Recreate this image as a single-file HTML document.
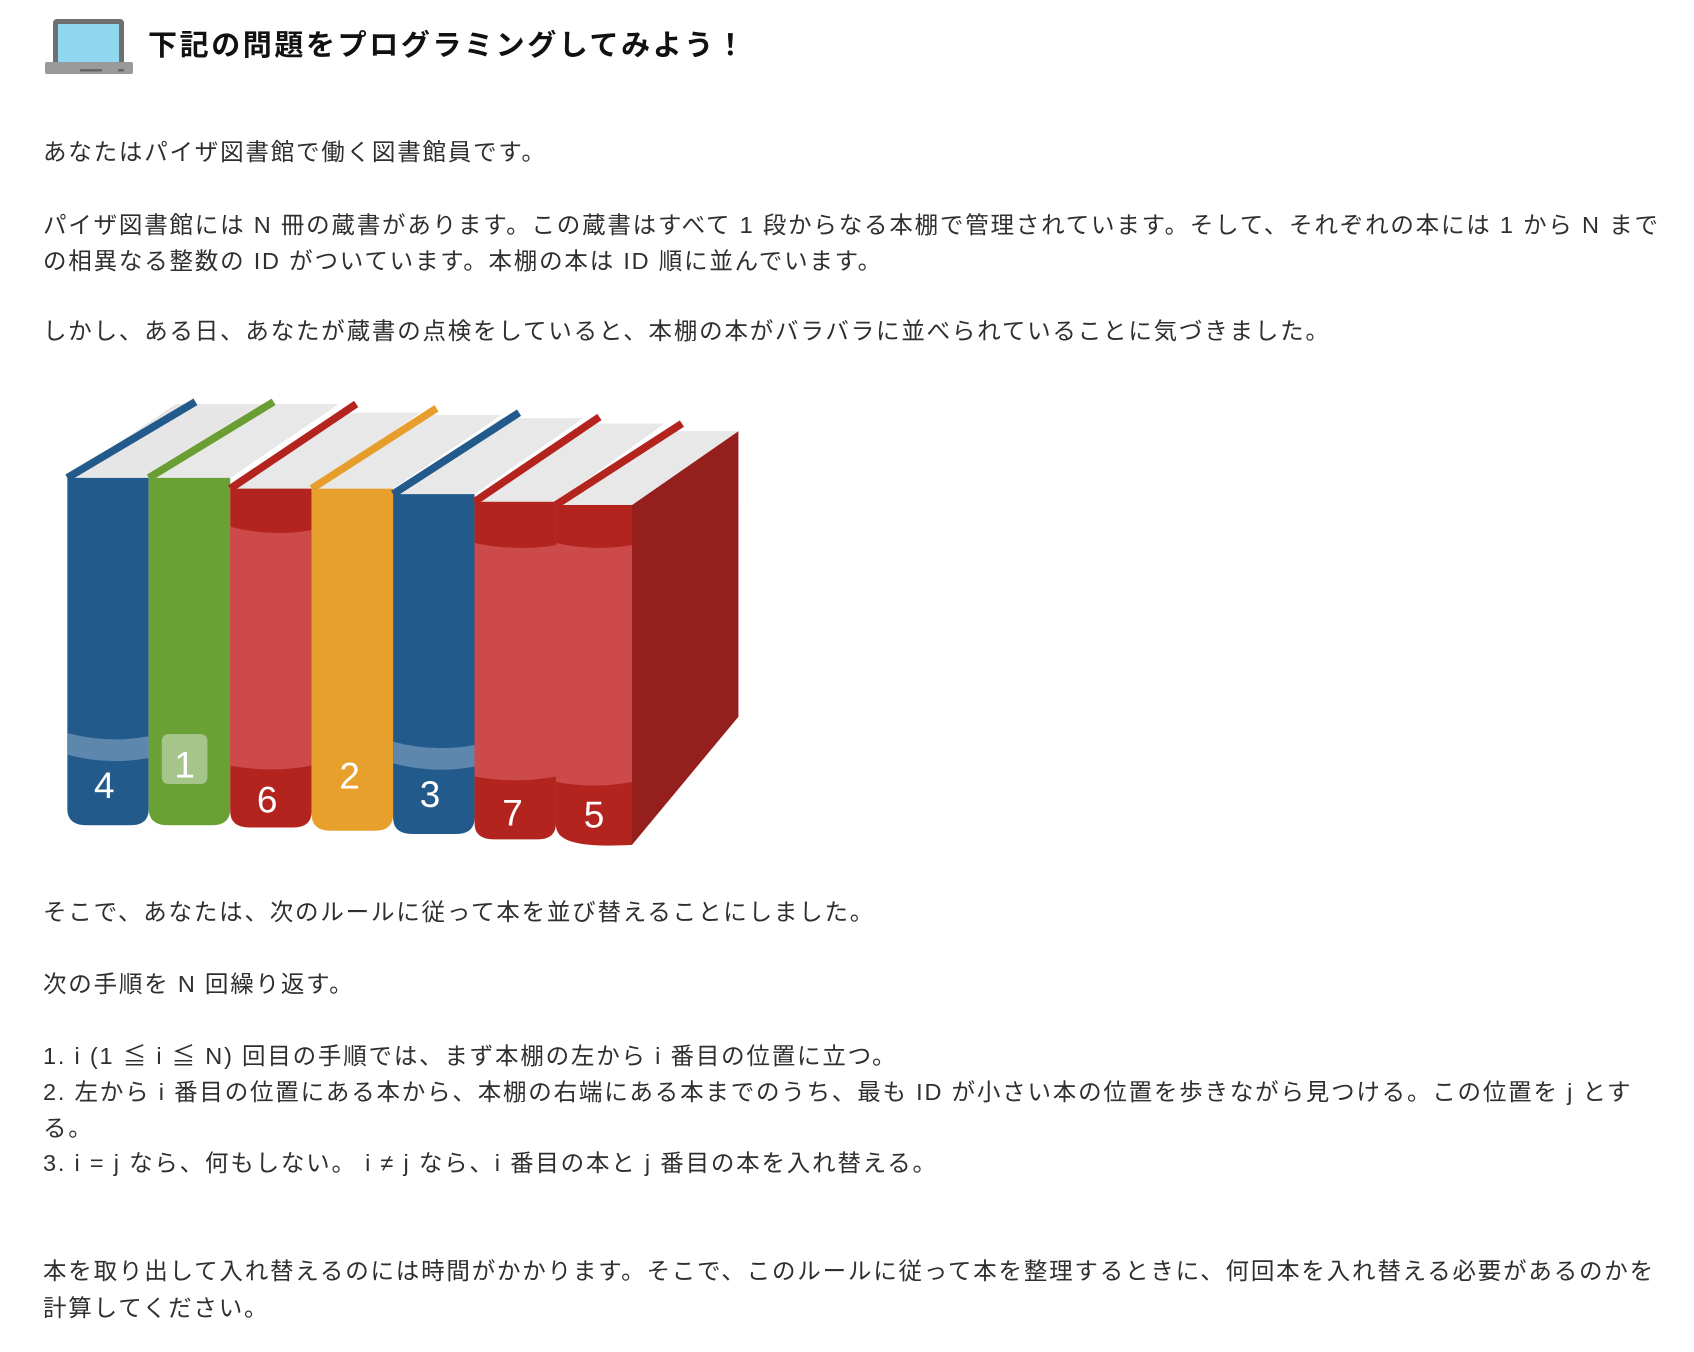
<!DOCTYPE html>
<html><head><meta charset="utf-8">
<style>
html,body{margin:0;padding:0;background:#fff;}
body{width:1694px;height:1352px;position:relative;overflow:hidden;font-family:"Liberation Sans","Noto Sans CJK JP",sans-serif;color:#2f2f2f;}
.t{position:absolute;left:43px;font-size:23.5px;letter-spacing:1.8px;white-space:nowrap;line-height:36px;}
.h{position:absolute;left:148px;top:26px;font-size:29px;font-weight:bold;letter-spacing:2.6px;color:#111;white-space:nowrap;line-height:40px;}
</style></head><body>
<svg style="position:absolute;left:0;top:0" width="1694" height="1352">
 <rect x="53" y="19" width="71" height="46" rx="4" fill="#6f6f6f"/>
 <rect x="58" y="24" width="61" height="38" fill="#8fd8f0"/>
 <rect x="45" y="62" width="88" height="12" rx="2" fill="#9a9a9a"/>
 <rect x="80" y="69" width="22" height="2.5" fill="#666"/>
 <rect x="118" y="69" width="6" height="2.5" fill="#666"/>
</svg>
<div class="h">下記の問題をプログラミングしてみよう！</div>
<div class="t" style="top:134px">あなたはパイザ図書館で働く図書館員です。</div>
<div class="t" style="top:207px">パイザ図書館には N 冊の蔵書があります。この蔵書はすべて 1 段からなる本棚で管理されています。そして、それぞれの本には 1 から N まで</div>
<div class="t" style="top:243px">の相異なる整数の ID がついています。本棚の本は ID 順に並んでいます。</div>
<div class="t" style="top:313px">しかし、ある日、あなたが蔵書の点検をしていると、本棚の本がバラバラに並べられていることに気づきました。</div>

<svg style="position:absolute;left:0;top:0" width="1694" height="1352" viewBox="0 0 1560 1245">
 <g font-family="Liberation Sans, sans-serif" font-size="34" fill="#fff" text-anchor="middle">
  <polygon points="62,440 137,440 237,372 162,372" fill="#e6e6e6"/>
  <line x1="62" y1="440" x2="180" y2="370" stroke="#235a8c" stroke-width="7"/>
  <path d="M62,440 H137 V745 Q137,760 120,760 H80 Q62,760 62,745 Z" fill="#235a8c"/>
  <path d="M62,675 Q100,685 137,678 V698 Q100,705 62,695 Z" fill="#5d87ad"/>
  <text x="96" y="735">4</text>
  <polygon points="137,440 212,440 312,372 237,372" fill="#e8e8e8"/>
  <line x1="137" y1="440" x2="252" y2="370" stroke="#6a9e33" stroke-width="7"/>
  <path d="M137,440 H212 V745 Q212,760 195,760 H155 Q137,760 137,745 Z" fill="#6aa134"/>
  <rect x="149" y="676" width="42" height="46" rx="6" fill="#a5c58a"/>
  <text x="170" y="716">1</text>
  <polygon points="212,450 287,450 387,380 312,380" fill="#e8e8e8"/>
  <line x1="212" y1="450" x2="328" y2="372" stroke="#b4241f" stroke-width="7"/>
  <path d="M212,450 H287 V747 Q287,762 270,762 H230 Q212,762 212,747 Z" fill="#b4241f"/>
  <path d="M212,485 Q250,495 287,488 V705 Q250,712 212,705 Z" fill="#cc4a4a"/>
  <text x="246" y="748">6</text>
  <polygon points="287,450 362,450 462,382 387,382" fill="#e8e8e8"/>
  <line x1="287" y1="450" x2="402" y2="376" stroke="#e69d2c" stroke-width="7"/>
  <path d="M287,450 H362 V750 Q362,765 345,765 H305 Q287,765 287,750 Z" fill="#e8a02c"/>
  <text x="322" y="726">2</text>
  <polygon points="362,455 437,455 537,385 462,385" fill="#e8e8e8"/>
  <line x1="362" y1="455" x2="478" y2="380" stroke="#235a8c" stroke-width="7"/>
  <path d="M362,455 H437 V753 Q437,768 420,768 H380 Q362,768 362,753 Z" fill="#235a8c"/>
  <path d="M362,683 Q400,693 437,686 V706 Q400,713 362,703 Z" fill="#5d87ad"/>
  <text x="396" y="743">3</text>
  <polygon points="437,462 512,462 612,390 537,390" fill="#e8e8e8"/>
  <line x1="437" y1="462" x2="552" y2="384" stroke="#b4241f" stroke-width="7"/>
  <path d="M437,462 H512 V758 Q512,773 495,773 H455 Q437,773 437,758 Z" fill="#b4241f"/>
  <path d="M437,500 Q475,508 512,502 V715 Q475,722 437,715 Z" fill="#cc4a4a"/>
  <text x="472" y="760">7</text>
  <polygon points="582,465 680,397 680,660 582,778" fill="#951f1c"/>
  <polygon points="512,465 582,465 680,397 612,397" fill="#e8e8e8"/>
  <line x1="512" y1="465" x2="628" y2="390" stroke="#b4241f" stroke-width="7"/>
  <path d="M512,465 H582 V778 Q545,780 530,776 Q512,772 512,760 Z" fill="#b4241f"/>
  <path d="M512,500 Q547,508 582,502 V720 Q547,727 512,720 Z" fill="#cc4a4a"/>
  <text x="547" y="762">5</text>
 </g>
</svg>

<div class="t" style="top:894px">そこで、あなたは、次のルールに従って本を並び替えることにしました。</div>
<div class="t" style="top:966px">次の手順を N 回繰り返す。</div>
<div class="t" style="top:1038px">1. i (1 ≦ i ≦ N) 回目の手順では、まず本棚の左から i 番目の位置に立つ。</div>
<div class="t" style="top:1074px">2. 左から i 番目の位置にある本から、本棚の右端にある本までのうち、最も ID が小さい本の位置を歩きながら見つける。この位置を j とす</div>
<div class="t" style="top:1110px">る。</div>
<div class="t" style="top:1145px">3. i = j なら、何もしない。 i ≠ j なら、i 番目の本と j 番目の本を入れ替える。</div>
<div class="t" style="top:1253px">本を取り出して入れ替えるのには時間がかかります。そこで、このルールに従って本を整理するときに、何回本を入れ替える必要があるのかを</div>
<div class="t" style="top:1290px">計算してください。</div>
</body></html>
